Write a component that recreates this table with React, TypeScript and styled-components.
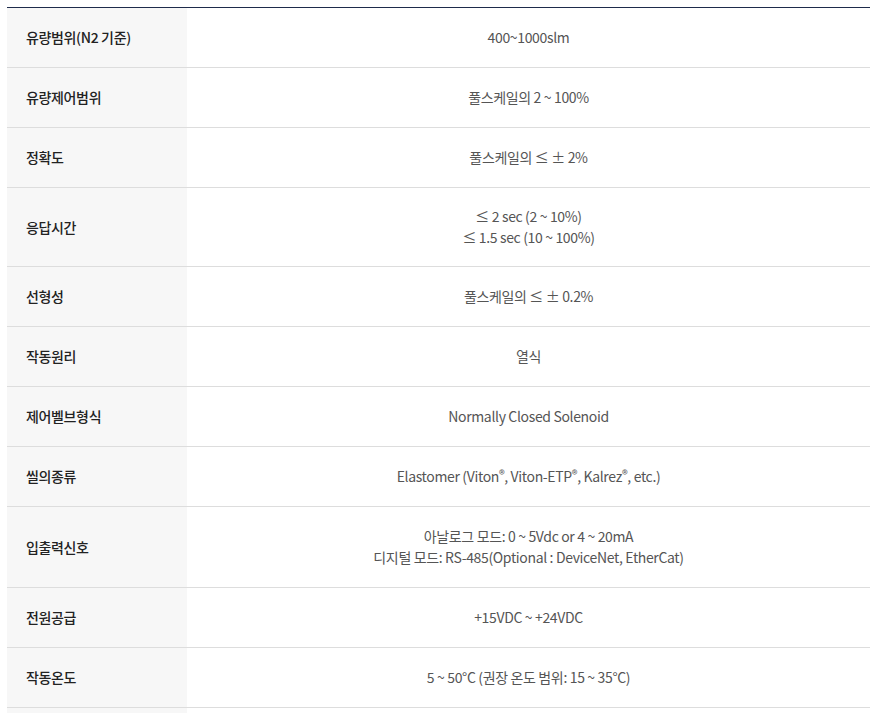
import React from "react";
import styled, { createGlobalStyle } from "styled-components";

const Global = createGlobalStyle`
  html, body { margin: 0; padding: 0; background: #fff; }
  body { padding: 7px 6px 0 7px; font-family: "Noto Sans CJK KR", "Noto Sans", sans-serif; }
`;

const Table = styled.table`
  width: 100%;
  border-collapse: collapse;
  border-top: 1px solid #1e2b4b;
  table-layout: fixed;
  font-family: "Noto Sans CJK KR", "Noto Sans", sans-serif;
  font-size: 14px;
  letter-spacing: -0.35px;
`;

const Row = styled.tr<{ $h: number }>`
  height: ${(p) => p.$h}px;
  border-bottom: 1px solid #dddddd;
`;

const Label = styled.th`
  box-sizing: border-box;
  width: 180px;
  background: #f7f7f7;
  color: #222;
  font-weight: 500;
  text-align: left;
  padding: 0 0 0 19px;
  line-height: 21px;
`;

const Value = styled.td`
  color: #555;
  font-weight: 400;
  text-align: center;
  line-height: 21px;
  padding: 0;
`;

const Sup = styled.span`
  font-size: 12px;
  vertical-align: 3px;
  line-height: 0;
`;

type Item = { label: string; value: React.ReactNode; h?: number };

const items: Item[] = [
  { label: "유량범위(N2 기준)", value: "400~1000slm" },
  { label: "유량제어범위", value: "풀스케일의 2 ~ 100%" },
  { label: "정확도", value: "풀스케일의 ≤ ± 2%" },
  {
    label: "응답시간",
    h: 79,
    value: (
      <>
        ≤ 2 sec (2 ~ 10%)
        <br />≤ 1.5 sec (10 ~ 100%)
      </>
    ),
  },
  { label: "선형성", value: "풀스케일의 ≤ ± 0.2%" },
  { label: "작동원리", value: "열식" },
  { label: "제어벨브형식", value: "Normally Closed Solenoid" },
  {
    label: "씰의종류",
    value: (
      <>
        Elastomer (Viton<Sup>®</Sup>, Viton-ETP<Sup>®</Sup>, Kalrez<Sup>®</Sup>, etc.)
      </>
    ),
  },
  {
    label: "입출력신호",
    h: 81,
    value: (
      <>
        아날로그 모드: 0 ~ 5Vdc or 4 ~ 20mA
        <br />
        디지털 모드: RS-485(Optional : DeviceNet, EtherCat)
      </>
    ),
  },
  { label: "전원공급", value: "+15VDC ~ +24VDC" },
  { label: "작동온도", value: "5 ~ 50°C (권장 온도 범위: 15 ~ 35°C)" },
  { label: "", value: "" },
];

export default function App() {
  return (
    <>
      <Global />
      <Table>
        <tbody>
          {items.map((it, i) => (
            <Row key={i} $h={it.h ?? 60}>
              <Label>{it.label}</Label>
              <Value>{it.value}</Value>
            </Row>
          ))}
        </tbody>
      </Table>
    </>
  );
}
